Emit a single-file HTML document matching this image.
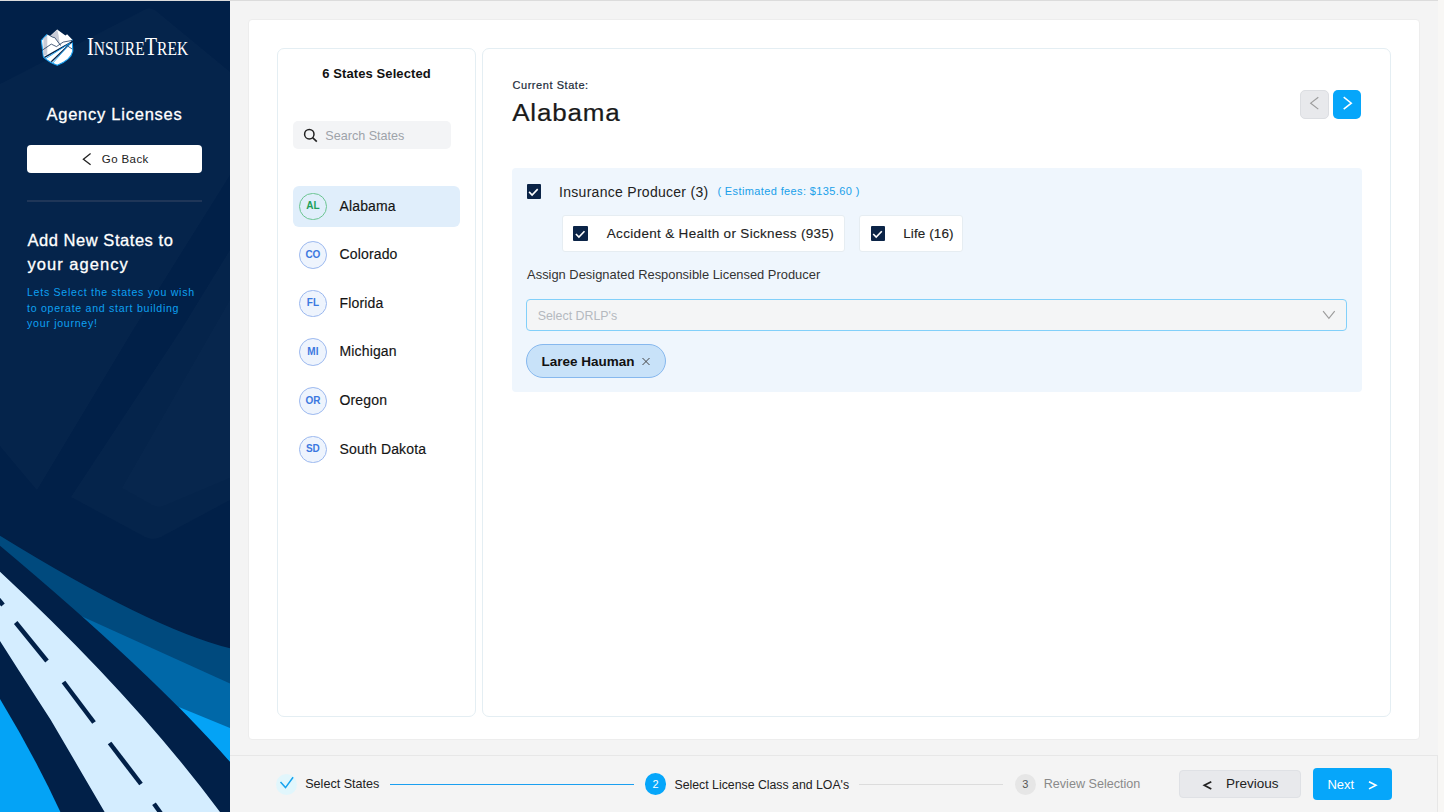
<!DOCTYPE html>
<html><head><meta charset="utf-8">
<style>
*{box-sizing:border-box;margin:0;padding:0}
html,body{width:1444px;height:812px;overflow:hidden;background:#f4f4f4;font-family:"Liberation Sans",sans-serif;color:#1f1f1f}
.abs{position:absolute}
.t{position:absolute;white-space:nowrap}
svg{position:absolute;overflow:visible}
</style></head>
<body>
<div class="abs" style="left:0px;top:0px;width:1438px;height:1px;background:#dcdcdc"></div>
<svg style="left:0;top:0" width="230" height="812" viewBox="0 0 230 812">
<rect x="0" y="1" width="230" height="811" fill="#012048"/>
<g fill="#ffffff" fill-opacity="0.02">
<path d="M0 446 Q20 470 37 490 L133 330 L230 175 L230 72 L156 11 Q150 6 144 10 L0 84 Z"/>
<path d="M71 497 L145 537 Q153 541 161 537 L230 500 L230 250 L181 330 Z"/>
</g>
<path fill="#fff" fill-opacity="0.012" d="M122 488 L152 505 Q159 509 166 505 L230 478 L230 300 Z"/>
<path fill="#004a7e" d="M0 535.7 Q150 628.2 230 648.3 L230 762 L0 560 Z"/>
<path fill="#0068a8" d="M81 616 L230 683.6 L230 762 L150 700 Z"/>
<path fill="#04a3f6" d="M178.8 707 L230 728 L230 762 Z"/>
<path fill="#012048" d="M0 545.8 Q151 672.3 230 761.9 L230 812 L0 812 Z"/>
<path fill="#d4edff" d="M0 571.7 Q133 695.2 220 812 L104.6 812 L77.4 765.4 L50.8 720 L18.5 670 L0 641 Z"/>
<path fill="#04a3f6" d="M0 699 Q35 757 60.4 812 L0 812 Z"/>
<g stroke="#012048" stroke-width="4.5"><path d="M-28 567 L3 605"/><path d="M15.7 622.5 L47 661"/><path d="M63.5 682 L94 722.5"/><path d="M109.6 743 L141 784"/><path d="M154 803.7 L180 840"/></g>
</svg>
<svg style="left:40px;top:28px" width="36" height="38" viewBox="0 0 36 38">
<path d="M17.2 1.4 L25.4 7.6 L27.1 6.2 L32.2 11.6 L32.8 23.2 Q31 32 17.2 37.3 Q7 33 3.4 28.8 L1.4 12.4 L7 6.5 L10.2 7.9 Z" fill="#fff"/>
<path d="M7 6.5 L1.4 12.4 L3.4 28.8 Q7 33 17.2 37.3 Q31 32 32.8 23.2 L32.2 11.6" fill="none" stroke="#1aa0f0" stroke-width="1.1"/>
<path d="M3.4 10.2 L7.3 7.3 L7.3 26.6 L3.4 27.7 Z" fill="#c8cbd6"/>
<path d="M10.2 7.9 L17.2 1.4 L18.6 7.3 L19.8 16.4 L14.7 9.6 Z" fill="#c8cbd6"/>
<g fill="none" stroke="#012048">
<path stroke-width="0.7" d="M10.2 7.9 L13 9.3 L14.7 9.6 L19.8 16.4 L21 17.5"/>
<path stroke-width="0.7" d="M1.7 22.6 L11.3 16.1 L16.4 18.6 L23.2 14.1 L32.2 12.4"/>
<path stroke-width="1.3" d="M4.5 29.4 L35 12.1"/>
<path stroke-width="1.3" d="M11.3 33.7 L32.2 13.6"/>
<path stroke-width="0.7" d="M27.7 18.1 L32.2 21"/>
</g>
<g fill="none" stroke="#1aa0f0" stroke-width="0.9">
<path d="M5.3 30.9 L30 15"/>
<path d="M12.6 35.2 L30.2 15.6"/>
</g>
</svg>
<div class="t" id="brand" style="left:86.5px;top:32.4px;color:#fff;font-family:'Liberation Serif',serif;font-size:25.8px;line-height:30px;transform:scaleX(0.785);transform-origin:0 0">I<span style="font-size:19.8px">NSURE</span>T<span style="font-size:19.8px">REK</span></div>
<div class="t" style="left:0px;width:229px;text-align:center;top:106.03px;font-size:16.5px;line-height:16.5px;color:#fff;letter-spacing:0.75px;-webkit-text-stroke:0.3px #fff">Agency Licenses</div>
<div class="abs" style="left:27px;top:145px;width:174.5px;height:28.3px;background:#fff;border-radius:4px"></div>
<svg style="left:0;top:0" width="1" height="1"><path d="M90.6 153.6 L83.4 159.2 L90.6 164.7" fill="none" stroke="#222" stroke-width="1.3"/></svg>
<div class="t" style="left:101.8px;top:153.67px;font-size:11.5px;line-height:11.5px;color:#222;letter-spacing:0.4px">Go Back</div>
<div class="abs" style="left:27px;top:200px;width:174.5px;height:2px;background:#1f3658"></div>
<div class="t" style="left:27.4px;top:232.03px;font-size:16.5px;line-height:16.5px;color:#fff;letter-spacing:0.55px;-webkit-text-stroke:0.3px #fff">Add New States to</div>
<div class="t" style="left:27.4px;top:256.43px;font-size:16.5px;line-height:16.5px;color:#fff;letter-spacing:1.05px;-webkit-text-stroke:0.3px #fff">your agency</div>
<div class="t" style="left:27px;top:287.13px;font-size:10.6px;line-height:10.6px;color:#0ea0f2;letter-spacing:0.72px">Lets Select the states you wish</div>
<div class="t" style="left:27px;top:302.73px;font-size:10.6px;line-height:10.6px;color:#0ea0f2;letter-spacing:0.72px">to operate and start building</div>
<div class="t" style="left:27px;top:318.33px;font-size:10.6px;line-height:10.6px;color:#0ea0f2;letter-spacing:0.72px">your journey!</div>
<div class="abs" style="left:1438px;top:0px;width:6px;height:812px;background:#f8f7f5"></div>
<div class="abs" style="left:248px;top:19px;width:1172px;height:721px;background:#fff;border:1px solid #ededed;border-radius:4px"></div>
<div class="abs" style="left:277px;top:48px;width:199px;height:669px;background:#fff;border:1px solid #e4eef3;border-radius:7px"></div>
<div class="abs" style="left:482px;top:48px;width:909px;height:669px;background:#fff;border:1px solid #e4eef3;border-radius:7px"></div>
<div class="t" style="left:277px;width:199px;text-align:center;top:67.20px;font-size:13px;line-height:13px;font-weight:bold;color:#111;letter-spacing:0.1px">6 States Selected</div>
<div class="abs" style="left:293px;top:121px;width:158.3px;height:28px;background:#f3f4f6;border-radius:5px"></div>
<svg style="left:0;top:0" width="1" height="1"><circle cx="309.3" cy="134.2" r="4.7" fill="none" stroke="#222" stroke-width="1.5"/><path d="M312.6 137.6 L316.8 141.6" stroke="#222" stroke-width="1.6"/></svg>
<div class="t" style="left:325.3px;top:130.33px;font-size:12.6px;line-height:12.6px;color:#9ea3aa">Search States</div>
<div class="abs" style="left:292.7px;top:185.6px;width:167.7px;height:41.4px;background:#e0eefb;border-radius:6px"></div>
<div class="abs" style="left:299px;top:192.5px;width:27.8px;height:27.8px;border-radius:50%;border:1px solid #6cc592;background:transparent"></div>
<div class="t" style="left:299px;width:27.8px;text-align:center;top:201.24px;font-size:10px;line-height:10px;color:#22a05a;font-weight:bold">AL</div>
<div class="t" style="left:339.5px;top:198.65px;font-size:14px;line-height:14px;color:#141414;letter-spacing:0.15px;-webkit-text-stroke:0.15px #141414">Alabama</div>
<div class="abs" style="left:299px;top:241.1px;width:27.8px;height:27.8px;border-radius:50%;border:1px solid #9bb8ef;background:#eef4fd"></div>
<div class="t" style="left:299px;width:27.8px;text-align:center;top:249.84px;font-size:10px;line-height:10px;color:#3b78e0;font-weight:bold">CO</div>
<div class="t" style="left:339.5px;top:247.25px;font-size:14px;line-height:14px;color:#141414;letter-spacing:0.15px;-webkit-text-stroke:0.15px #141414">Colorado</div>
<div class="abs" style="left:299px;top:289.7px;width:27.8px;height:27.8px;border-radius:50%;border:1px solid #9bb8ef;background:#eef4fd"></div>
<div class="t" style="left:299px;width:27.8px;text-align:center;top:298.44px;font-size:10px;line-height:10px;color:#3b78e0;font-weight:bold">FL</div>
<div class="t" style="left:339.5px;top:295.85px;font-size:14px;line-height:14px;color:#141414;letter-spacing:0.15px;-webkit-text-stroke:0.15px #141414">Florida</div>
<div class="abs" style="left:299px;top:338.3px;width:27.8px;height:27.8px;border-radius:50%;border:1px solid #9bb8ef;background:#eef4fd"></div>
<div class="t" style="left:299px;width:27.8px;text-align:center;top:347.04px;font-size:10px;line-height:10px;color:#3b78e0;font-weight:bold">MI</div>
<div class="t" style="left:339.5px;top:344.45px;font-size:14px;line-height:14px;color:#141414;letter-spacing:0.15px;-webkit-text-stroke:0.15px #141414">Michigan</div>
<div class="abs" style="left:299px;top:386.9px;width:27.8px;height:27.8px;border-radius:50%;border:1px solid #9bb8ef;background:#eef4fd"></div>
<div class="t" style="left:299px;width:27.8px;text-align:center;top:395.64px;font-size:10px;line-height:10px;color:#3b78e0;font-weight:bold">OR</div>
<div class="t" style="left:339.5px;top:393.05px;font-size:14px;line-height:14px;color:#141414;letter-spacing:0.15px;-webkit-text-stroke:0.15px #141414">Oregon</div>
<div class="abs" style="left:299px;top:435.5px;width:27.8px;height:27.8px;border-radius:50%;border:1px solid #9bb8ef;background:#eef4fd"></div>
<div class="t" style="left:299px;width:27.8px;text-align:center;top:444.24px;font-size:10px;line-height:10px;color:#3b78e0;font-weight:bold">SD</div>
<div class="t" style="left:339.5px;top:441.65px;font-size:14px;line-height:14px;color:#141414;letter-spacing:0.15px;-webkit-text-stroke:0.15px #141414">South Dakota</div>
<div class="t" style="left:512.5px;top:80.49px;font-size:11px;line-height:11px;color:#1c2b3a;letter-spacing:0.55px;-webkit-text-stroke:0.2px #1c2b3a">Current State:</div>
<div class="t" style="left:512.2px;top:99.19px;font-size:26px;line-height:26px;color:#1a1a1a;letter-spacing:0.8px;-webkit-text-stroke:0.25px #1a1a1a;transform:scaleY(0.913);transform-origin:0 22px">Alabama</div>
<div class="abs" style="left:1300px;top:90px;width:28.8px;height:28.8px;background:#e8e9ec;border:1px solid #dcdee2;border-radius:5px"></div>
<svg style="left:0;top:0" width="1" height="1"><path d="M1318.3 97.2 L1310.7 103.15 L1318.3 109.1" fill="none" stroke="#9c9c9c" stroke-width="1.2"/></svg>
<div class="abs" style="left:1333px;top:90px;width:28.2px;height:28.8px;background:#06a6fa;border-radius:5px"></div>
<svg style="left:0;top:0" width="1" height="1"><path d="M1343.7 97.2 L1351.3 103.15 L1343.7 109.1" fill="none" stroke="#fff" stroke-width="1.5"/></svg>
<div class="abs" style="left:512px;top:168px;width:849.5px;height:224px;background:#eff6fd;border-radius:4px"></div>
<div class="abs" style="left:526.5px;top:184.2px;width:14.5px;height:14.6px;background:#0b2447;border-radius:1px"></div>
<svg style="left:0;top:0" width="1" height="1"><path d="M529.1 191.89999999999998 L532.1 195.0 L537.7 189.1" fill="none" stroke="#fff" stroke-width="1.6"/></svg>
<div class="t" style="left:559.1px;top:184.95px;font-size:14px;line-height:14px;color:#222;letter-spacing:0.28px">Insurance Producer (3)</div>
<div class="t" style="left:717.4px;top:186.09px;font-size:11px;line-height:11px;color:#19a0ea;letter-spacing:0.38px">( Estimated fees: $135.60 )</div>
<div class="abs" style="left:562px;top:215px;width:283px;height:37px;background:#fff;border:1px solid #e6edf2;border-radius:3px"></div>
<div class="abs" style="left:573.3px;top:226.3px;width:14.5px;height:14.6px;background:#0b2447;border-radius:1px"></div>
<svg style="left:0;top:0" width="1" height="1"><path d="M575.9 234.0 L578.9 237.10000000000002 L584.5 231.20000000000002" fill="none" stroke="#fff" stroke-width="1.6"/></svg>
<div class="t" style="left:606.8px;top:226.77px;font-size:13.5px;line-height:13.5px;color:#222;letter-spacing:0.32px;-webkit-text-stroke:0.12px #222">Accident &amp; Health or Sickness (935)</div>
<div class="abs" style="left:859px;top:215px;width:104px;height:37px;background:#fff;border:1px solid #e6edf2;border-radius:3px"></div>
<div class="abs" style="left:870.6px;top:226.3px;width:14.5px;height:14.6px;background:#0b2447;border-radius:1px"></div>
<svg style="left:0;top:0" width="1" height="1"><path d="M873.2 234.0 L876.2 237.10000000000002 L881.8000000000001 231.20000000000002" fill="none" stroke="#fff" stroke-width="1.6"/></svg>
<div class="t" style="left:903.2px;top:226.77px;font-size:13.5px;line-height:13.5px;color:#222;letter-spacing:0.1px;-webkit-text-stroke:0.12px #222">Life (16)</div>
<div class="t" style="left:527.1px;top:269.28px;font-size:12.9px;line-height:12.9px;color:#333">Assign Designated Responsible Licensed Producer</div>
<div class="abs" style="left:526.2px;top:299.2px;width:820.8px;height:31.5px;background:#f4f5f6;border:1px solid #82d0fa;border-radius:4px"></div>
<div class="t" style="left:537.7px;top:309.60px;font-size:12.4px;line-height:12.4px;color:#b5b9bf">Select DRLP's</div>
<svg style="left:0;top:0" width="1" height="1"><path d="M1323.1 311.2 L1328.9 318.3 L1334.7 311.2" fill="none" stroke="#9d9d9d" stroke-width="1.2"/></svg>
<div class="abs" style="left:526.2px;top:344px;width:139.4px;height:33.7px;background:#c8e2f9;border:1px solid #86b8ee;border-radius:17px"></div>
<div class="t" style="left:541.5px;top:354.77px;font-size:13.5px;line-height:13.5px;color:#111;font-weight:bold">Laree Hauman</div>
<svg style="left:0;top:0" width="1" height="1"><path d="M642.5 358 L649.5 365 M649.5 358 L642.5 365" stroke="#444" stroke-width="1"/></svg>
<div class="abs" style="left:230px;top:755px;width:1208px;height:57px;background:#f4f4f4;border-top:1px solid #e7e7e7;border-right:1px solid #e7e7e7"></div>
<div class="abs" style="left:275.8px;top:773.5px;width:21.7px;height:21.7px;border-radius:50%;background:#e1f6fc"></div>
<svg style="left:0;top:0" width="1" height="1"><path d="M280.5 782.1 L285.5 787.6 L293.1 777.2" fill="none" stroke="#16a3ee" stroke-width="1.5"/></svg>
<div class="t" style="left:305.2px;top:777.63px;font-size:12.6px;line-height:12.6px;color:#222">Select States</div>
<div class="abs" style="left:390.3px;top:784px;width:244.1px;height:1px;background:#1a9ff0"></div>
<div class="abs" style="left:644.8px;top:773.4px;width:21.6px;height:21.6px;border-radius:50%;background:#06a6fa"></div>
<div class="t" style="left:644.8px;width:21.6px;text-align:center;top:778.89px;font-size:11px;line-height:11px;color:#fff">2</div>
<div class="t" style="left:674.5px;top:778.59px;font-size:12.3px;line-height:12.3px;color:#222">Select License Class and LOA's</div>
<div class="abs" style="left:859.1px;top:784px;width:144.2px;height:1px;background:#dcdcdc"></div>
<div class="abs" style="left:1014.6px;top:773.6px;width:21.2px;height:21.2px;border-radius:50%;background:#e6e6e6"></div>
<div class="t" style="left:1014.6px;width:21.2px;text-align:center;top:778.89px;font-size:11px;line-height:11px;color:#555">3</div>
<div class="t" style="left:1043.7px;top:777.93px;font-size:12.6px;line-height:12.6px;color:#8a8a8a">Review Selection</div>
<div class="abs" style="left:1179.2px;top:769.9px;width:121.7px;height:28.6px;background:#e8e9ec;border:1px solid #dfe1e5;border-radius:4px"></div>
<svg style="left:0;top:0" width="1" height="1"><path d="M1211.3 781.7 L1204.3 785.3 L1211.3 788.9" fill="none" stroke="#222" stroke-width="1.7"/></svg>
<div class="t" style="left:1226.1px;top:776.77px;font-size:13.5px;line-height:13.5px;color:#222">Previous</div>
<div class="abs" style="left:1313.4px;top:768.3px;width:78.5px;height:31.5px;background:#06a6fa;border-radius:4px"></div>
<div class="t" style="left:1327.4px;top:778.00px;font-size:13px;line-height:13px;color:#fff">Next</div>
<svg style="left:0;top:0" width="1" height="1"><path d="M1369 781.7 L1376 785.3 L1369 788.9" fill="none" stroke="#fff" stroke-width="1.6"/></svg>
</body></html>
